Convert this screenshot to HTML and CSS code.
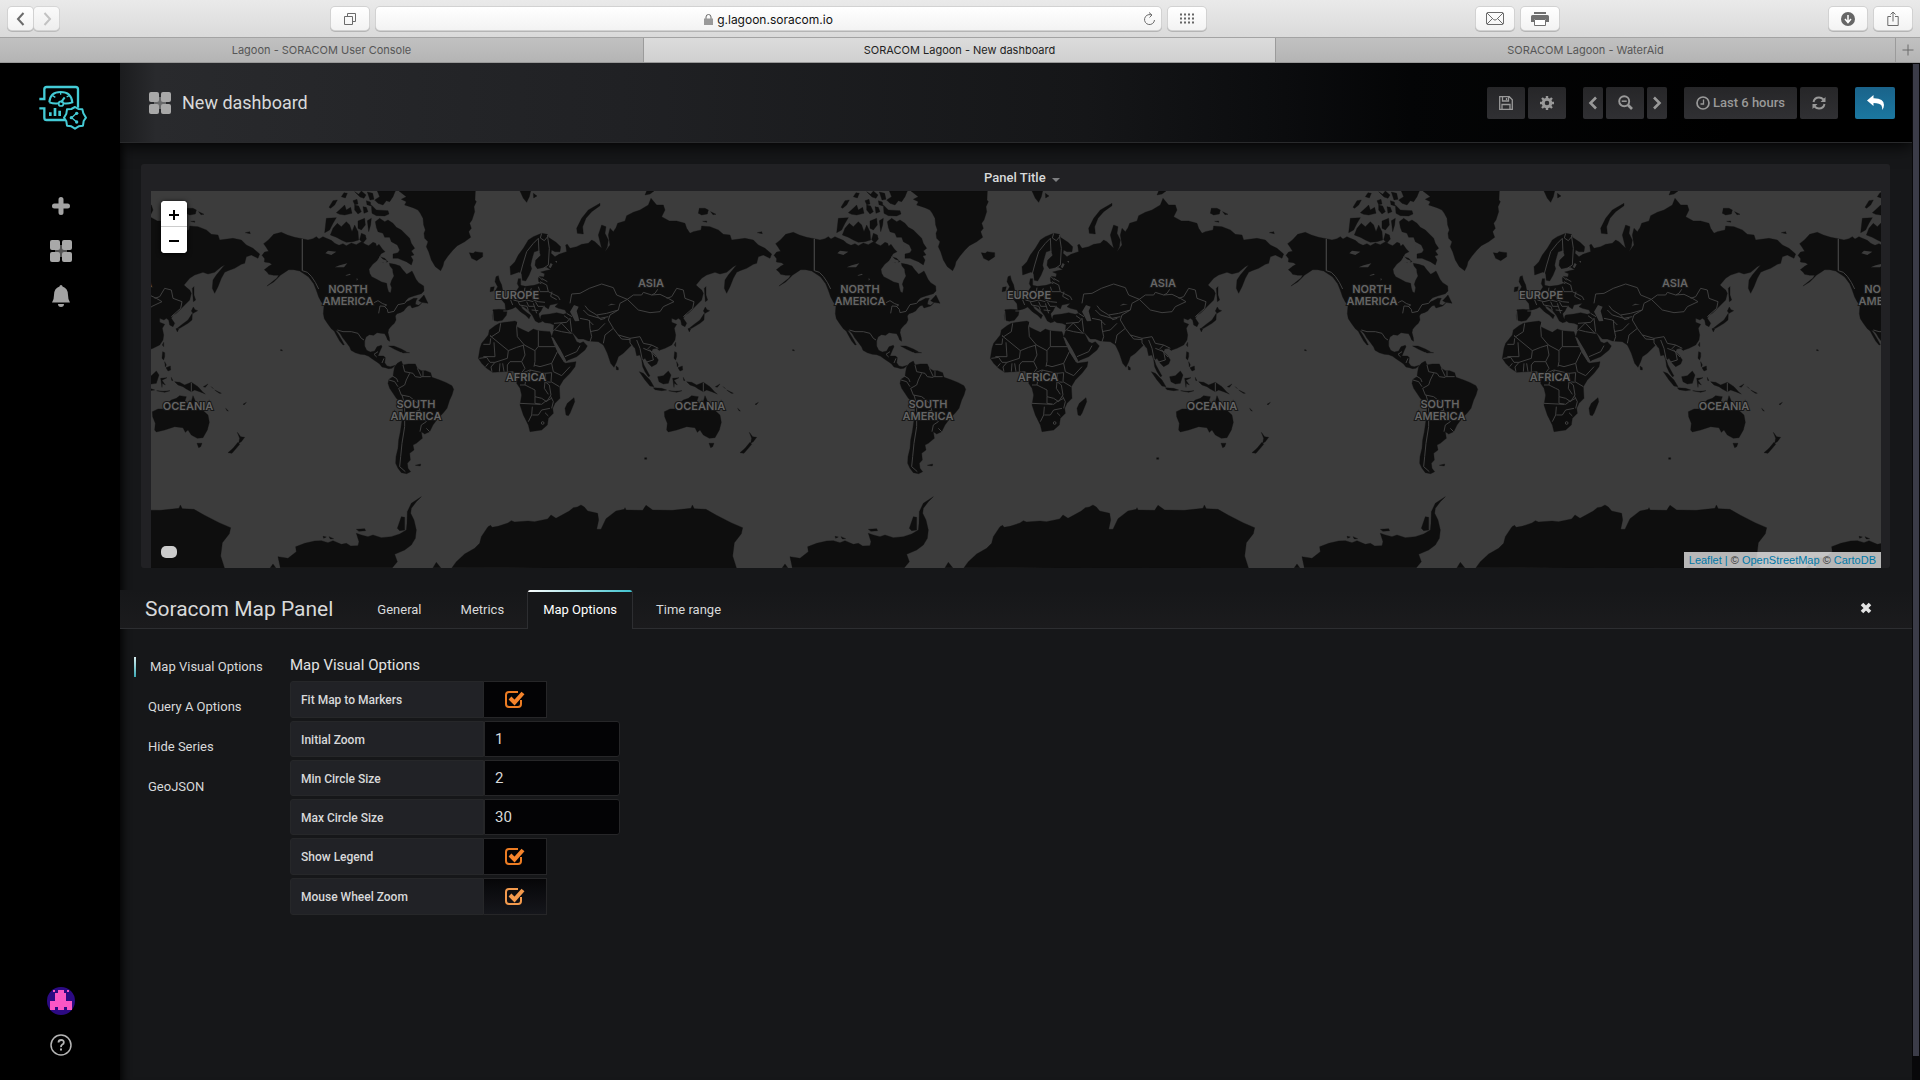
FILE: index.html
```html
<!DOCTYPE html>
<html lang="en">
<head>
<meta charset="utf-8">
<meta name="viewport" content="width=device-width, initial-scale=1">
<title>SORACOM Lagoon - New dashboard</title>
<link rel="stylesheet" href="styles.css">
</head>
<body>
<div class="browser-bar">
  <div class="bar-left">
    <div class="nav-pair">
      <button class="chrome-btn nav-btn" aria-label="Back"><svg width="10" height="14" viewBox="0 0 10 14"><path d="M7.500 1 2 7l5.500 6" class="line thick"/></svg></button>
      <button class="chrome-btn nav-btn dim" aria-label="Forward"><svg width="10" height="14" viewBox="0 0 10 14"><path d="M2.500 1 8 7l-5.500 6" class="line thick"/></svg></button>
    </div>
    <button class="chrome-btn" aria-label="Show all tabs"><svg width="14" height="14" viewBox="0 0 14 14"><path d="M1.500 4.500h8v8h-8zM4.500 4V1.500h8v8H10" class="line"/></svg></button>
  </div>
  <div class="url-bar">
    <span class="url"><svg width="9" height="11" viewBox="0 0 9 11"><path d="M2 5V3a2.500 2.500 0 0 1 5 0v2" class="line"/><path d="M0 4.500h9V11H0z" fill="#999"/></svg>g.lagoon.soracom.io</span>
    <button class="reload" aria-label="Reload"><svg width="13" height="14" viewBox="0 0 13 14"><path d="M8 2.800A5 5 0 1 0 11.500 8M6 .5l3 2.500L6.500 5.500" class="line"/></svg></button>
  </div>
  <div class="bar-right">
    <button class="chrome-btn" aria-label="Top sites"><svg width="16" height="12" viewBox="0 0 16 12"><path d="M1 1.500h15M1 5.500h15M1 9.500h15" stroke="#666" stroke-width="2" stroke-dasharray="2 2"/></svg></button>
    <div class="pair">
      <button class="chrome-btn" aria-label="Mail"><svg width="18" height="13" viewBox="0 0 18 13"><rect x=".5" y=".5" width="17" height="12" rx="1.500" class="line"/><path d="m1 1 6.500 6.500q1.500 1.200 3 0L17 1M1 12l5.500-5.500M17 12l-5.500-5.500" class="line"/></svg></button>
      <button class="chrome-btn" aria-label="Print"><svg width="18" height="14" viewBox="0 0 18 14"><path d="M3 0h12v2H3zM1.500 3h15Q18 3 18 4.500V10h-3V7H3v3H0V4.500Q0 3 1.500 3z" fill="#707070"/><path d="M3.500 7.500h11v6h-11z" fill="#fff" stroke="#707070"/></svg></button>
    </div>
    <div class="pair">
      <button class="chrome-btn" aria-label="Downloads"><svg width="14" height="14" viewBox="0 0 14 14"><circle cx="7" cy="7" r="7" fill="#666"/><path d="M7 3v7M4 7l3 3.500L10 7" fill="none" stroke="#fff" stroke-width="1.500"/></svg></button>
      <button class="chrome-btn" aria-label="Share"><svg width="12" height="16" viewBox="0 0 12 16"><path d="M4 5.500H.8v9h10.400v-9H8M6 10.500V1M3.500 3.500 6 1l2.500 2.500" class="line"/></svg></button>
    </div>
  </div>
</div>
<nav class="tab-bar" aria-label="Browser tabs">
  <a class="browser-tab" href="#console">Lagoon - SORACOM User Console</a>
  <a class="browser-tab current" href="#lagoon">SORACOM Lagoon - New dashboard</a>
  <a class="browser-tab" href="#wateraid">SORACOM Lagoon - WaterAid</a>
  <button class="new-tab" aria-label="New tab"><svg width="12" height="12" viewBox="0 0 12 12"><path d="M6 .5v11M.5 6h11" class="line"/></svg></button>
</nav>

<div class="app">
  <aside class="sidebar">
    <a class="logo" href="#home" aria-label="Lagoon home"><svg width="49" height="45" viewBox="117 75 147 135" fill="none" stroke="#44cbd6" stroke-width="7">
      <path d="M118 117h15V88q0-7 7-7h87q7 0 7 7v55M118 145h15v28q0 7 7 7h56"/>
      <path d="M148 127q2-31 34-31t35 31q-14 5-26 3M148 127q14 5 26 3M183 127l11-15" stroke-width="6"/><circle cx="183" cy="131" r="7" stroke-width="5"/><path d="M182 96v8M158 107l8 5M207 107l-7 4" stroke-width="4"/>
      <path d="M151 157v11M165 144v24M179 152v16" stroke-width="8"/>
      <path d="m225 141 10 6 12 1 3 12 8 13-7 10-2 14-13 2-11 7-11-7-13-2-2-13-7-11 7-12 2-13 13-1z" stroke-width="6" stroke-linejoin="round"/>
      <path d="m230 159-15 14 15 13" stroke-width="4"/><g fill="#44cbd6" stroke="none"><circle cx="230" cy="160" r="5"/><circle cx="214" cy="173" r="5"/><circle cx="230" cy="186" r="5"/></g></svg></a>
    <nav class="side-nav" aria-label="Main">
      <a href="#create" aria-label="Create"><svg width="22" height="22" viewBox="0 0 22 22"><path d="M11 4.500v13M4.500 11h13" stroke="#a3a3a3" stroke-width="5" stroke-linecap="round"/></svg></a>
      <a href="#dashboards" aria-label="Dashboards"><svg width="22" height="22" viewBox="0 0 22 22"><use href="#grid4"/></svg></a>
      <a href="#alerts" aria-label="Alerting"><svg width="18" height="22" viewBox="0 0 18 22" fill="#a3a3a3"><path d="M9 0q1.500 0 1.500 1.600Q16 3.500 16 10q0 5 2 7.500H0Q2 15 2 10q0-6.500 5.500-8.400Q7.500 0 9 0zM6 19h6q0 3-3 3t-3-3z"/></svg></a>
    </nav>
    <div class="side-foot">
      <a href="#profile" aria-label="Profile"><svg width="28" height="28" viewBox="0 0 28 28"><circle cx="14" cy="14" r="14" fill="#2c0a83"/><path d="M11 3h6v3h2v8h6v9h-5v-3h-3v3h-6v-3H8v3H3v-9h5V6h3zM6 3h2v2H6zM20 3h2v2h-2z" fill="#fa56c5"/></svg></a>
      <a href="#help" aria-label="Help"><svg width="22" height="22" viewBox="0 0 22 22" fill="none" stroke="#b5b5b5"><circle cx="11" cy="11" r="10" stroke-width="1.500"/><path d="M8.500 8.500q0-2.500 2.700-2.500t2.600 2.400q0 1.300-1.500 2.200T11 13.200" stroke-width="1.800"/><path d="M11 14.500v2" stroke-width="2"/></svg></a>
    </div>
  </aside>

  <main class="page">
    <header class="dash-head">
      <svg width="22" height="22" viewBox="0 0 22 22"><defs><g id="grid4" fill="#a8a8a8"><path d="M5 5h12v12H5z" opacity=".5"/><rect width="10" height="10" rx="2"/><rect x="12" width="10" height="10" rx="2"/><rect y="12" width="10" height="10" rx="2"/><rect x="12" y="12" width="10" height="10" rx="2"/></g></defs><use href="#grid4"/></svg>
      <h1>New dashboard</h1>
      <div class="tools">
        <div class="tool-group">
          <button class="tool wide" aria-label="Save"><svg width="14" height="14" viewBox="0 0 14 14"><path d="M.7.700h9.600l3 3v9.600H.7zM3.500 1v4h6V1M3 13V8.500h8V13M7.500 2v2" fill="none" stroke="#999" stroke-width="1.300"/></svg></button>
          <button class="tool wide" aria-label="Settings"><svg width="14" height="14" viewBox="0 0 14 14"><circle cx="7" cy="7" r="3.800" fill="none" stroke="#999" stroke-width="3"/><path d="M7 0v2.500M7 11.500V14M0 7h2.500M11.500 7H14M2 2l2 2M10 10l2 2M2 12l2-2M10 4l2-2" stroke="#999" stroke-width="2.400"/></svg></button>
        </div>
        <div class="tool-group">
          <button class="tool slim" aria-label="Earlier"><svg width="10" height="14" viewBox="0 0 10 14"><path d="M8 1.500 2.500 7 8 12.500" fill="none" stroke="#999" stroke-width="2.600"/></svg></button>
          <button class="tool wide" aria-label="Zoom out"><svg width="15" height="15" viewBox="0 0 15 15" fill="none" stroke="#999"><circle cx="6.200" cy="6.200" r="5" stroke-width="1.900"/><path d="M3.700 6.200h5" stroke-width="1.500"/><path d="m10 10 4 4" stroke-width="2.600"/></svg></button>
          <button class="tool slim" aria-label="Later"><svg width="10" height="14" viewBox="0 0 10 14"><path d="M2 1.500 7.500 7 2 12.500" fill="none" stroke="#999" stroke-width="2.600"/></svg></button>
        </div>
        <div class="tool-group">
          <button class="tool time"><svg width="14" height="14" viewBox="0 0 14 14" fill="none" stroke="#999"><circle cx="7" cy="7" r="6" stroke-width="1.700"/><path d="M7.500 3.500V8H4.500" stroke-width="1.300"/></svg>Last 6 hours</button>
          <button class="tool wide" aria-label="Refresh"><svg width="14" height="14" viewBox="0 0 14 14"><path d="M1.500 6Q2.500 1.500 7 1.500q2.500 0 4.500 2M12.500 8q-1 4.500-5.500 4.500-2.500 0-4.500-2" fill="none" stroke="#999" stroke-width="2"/><path d="M13.500 1v5h-5zM.5 13V8h5z" fill="#999"/></svg></button>
        </div>
        <button class="tool back" aria-label="Back to dashboard"><svg width="17" height="15" viewBox="0 0 17 15"><path d="M6.500 0v3.200Q17 3 17 10q0 3-2 5 .5-2.500-.5-4.500Q13 8 6.500 8v3L0 5.500z" fill="#fff"/></svg></button>
      </div>
    </header>

    <section class="panel">
      <h2 class="panel-title">Panel Title <span class="caret"></span></h2>
      <div class="map">
        <svg class="map-canvas" role="img" aria-label="World map">
          <defs>
            <g id="world">
              <g transform="scale(.33333)">
                <g transform="translate(-357 -123)" class="land">
                  <path d="M460 247l18 8 22 7 23 4 17 4 15-4 10-6 8 7 12-7 10 5 8 3 9 4 8 8 13 6 12-5 10 6 15-8 15 5 15-9 12 8 10 4 13-10 8 3 3 9 7-6 10 14 8 8-12 6-6 12-7 10-12 10-11 15 2 12 6 10 15 8 15 8 15 4 2 13 4 13 6 2 3-15-4-10 4-12 7-13-3-10-1-10-8-10-2-8 17 3 15 5 7 10 13 15 8-5 8-5 5 10 7 15 8 10 15 10 1 15-8 8-23 7-15 5-12 13 12-3 15-8 11 0-4 8-2 10 10 3 10-8-10 10-20 6-5-8-7 2-8 8-5 7-10 5-10 3-5 7 2 12-5 10-9 8-8 10-2 10 4 15 1 11-6-4-4-10-5-9-11-1-12-2-10 8-13-2-10 7-4 12v15l6 13 11 5 13-3 7-13 13-4 2 4-5 11-5 12-2 5h17l5 5-2 15 7 10 10 2 15-4-10 9-10 1-10-3-10-2-8-10-12-8-10-7-10-7-12-5-13-1-15-5-13-7-4-10-11-15-10-13-7-12-8-8-7-2 8 10 10 17 9 16-4 1-10-12-8-14-8-15-9-8-11-15-10-15-3-15 2-25-8-10-8-15-7-20-8-20-15-20-12-8-15-10-18-4h-15l-10 7-15 10-10 10-10 10-20 12 15-12 15-12 5-8-15 0-15-3-5-7-8-7 13-10 10-6-8-5-15-2 1-10-8-10 8-10 12-2-8-13-7-10 15-12 15-16z"/>
                  <path d="M813 123h229l-1 27 4 5-7 15 2 15-8 25-7 10 5 15-8 10 6 17-18 13-22 12-13 13-15 18-12 17-3 13-7 14-16-12-12-20-8-25-7-15 5-15-10-10-2-15 4-10-5-15-2-20-8-15-7-10-15-7-25-8 5-10-15-7 15-8z"/>
                  <path d="M748 123h54l-7 17-10 15-10-3-10 13-15-5-10-10 15-10zM595 205l30-2-10 17-10 20-15 8zM607 255l8-20 13-15 12 10 15-15 10 10 7 20 8-20 10 20 2 25-17 5-20 2-15-7-15-8zM603 172l12-20 13-2-8 15-12 10zM625 188l15-13 10-10 5 15 13-8 4 18-22 5-15-2zM680 165l12 3 8 17-10 7-10-12zM705 170l10 2 5 13-12 5zM730 165l15 15 35 2 3 10-13 6-25-1-13-7zM690 213l20-8 2 20-12 15-10-5zM718 212l12-7-2 20-6 20zM700 250l12 5 3 12-10 12-10-10zM742 215l13-10 15 10 10-5 15 10 10 12 15 8 15 15 10 10 5 15 10 15-10 8 8 12-10 3 7 12-5 15-15-10-13-5-12-5-15 0v-13l15-4 5-8-7-15-18-10-5-13h-15l-5-12-15-5-5-13zM755 320l15 5 10 10-15 3zM675 152l12-4 3 14-10 2zM640 140l8-12 10 2-6 14zM680 125l12 8 8-10 14 12-6 10-12-4zM718 126l16 4 4 18-12 2zM715 152l12 4 2 12-12-4zM872 452l16-17 12 25-20-3zM782 588l16 0 22 9 15 8-17 1-18-8zM820 605l25 3-20 1zM862 946l16-4-1 6zM456 600l6-1 1 4z"/>
                  <path d="M800 650l8-10 12-7 5 12 15-3h22l6 13 12 7h13l15 6 4 14 23 8 20 8 17 9 5 11-5 17-7 15-8 25-12 15-15 15-15 20-10 20-15 7-10-7 3 20-18 15-10 5 3 15-13 10 2 20-9 10 2 15 8 10-12 6-16-3-10-13-7-15 1-20 6-25 2-25 5-25 5-35 3-30-3-20-17-15-10-15-10-15-5-15 3-12 12-8 2-15z"/>
                  <path d="M457 1253l-7-33 30 5 25-20-2-15 27-10 30-7 20-1 20 6 15-6 25 11 15-3 13 8 22-1 3-12-8-25 15 5 20 5 15-5 25 8 30-3 25-8 20-12 2-20 1-35 12-25 30-20-15 15-15 20-2 15 10 20 7 30-3 25-12 20-20 15-30 13 8 22-15 18zM808 1135l12-35 10 2v38l-15 2zM685 1138l25-2 3 6-20 2zM585 1159l10 2-8 4zM603 1160l14 6-10 1zM427 1253l8-11 8 11zM915 1253l10-16 13 16z"/>
                  <path d="M972 1253l13-18 25-23 30-17 15-15 5-20 20-30 8-4 4 6 18-3 30-10 10-7 10 4 40-3 19 2 40-8 10-12 15 10 40-22 12-10 12-2 11-6 10 6 10 12 30 7 3 20-6 28h13l15-32 30-23 25-5 2-5 3 7 50 1 10-15 20 14 60 1 55-6 4-10 6 11 35 2 30 17 45 23 35 15-4 18-21 27-5 40 12 38z"/>
                  <g class="sea">
                    <path d="M592 310l8-8 25 3-15 10zM620 352l15-6 23-6-10 12zM652 376l14-5 2 3-12 3zM755 318l10 10 12 4-4 8-14-3-8-8zM790 285l12 5-2 12-10-4zM686 384l4 4-4 4z"/>
                  </g>
                  <g class="border">
                    <path d="M523 266v96" stroke-width="4"/>
                    <path d="M523 362l15 5 12 12 12 18 10 20M628 540l17 5h25l20 5 10 15 8 5M738 458l12-6 14 9 12 4-6 4-14-1-4 22M768 468l10 10 2 10 18-4 12-20 20-4 10-12M825 645l5 20 25 5 7 10M845 670l-10 20-5 15M783 690l17 5 10 15M830 705l-18 10 8 20 25 5M845 740l25 20 5 20-25 10h-20M875 780l5 20 15 15-15 10M830 790v40l-8 50-4 40-3 30 17 15M880 825l-4 20M895 835l10 10M868 655l12 25 28 0M885 662v18M822 735l8 28 0 27M750 605l-12 8 8 8M768 625l-6 14M862 680l14 2 4 0M790 676l16 10 4 10"/>
                  </g>
                </g>
                <g transform="translate(669 -18)" class="land">
                  <path d="M122 270l-2-25 15-15 10-20 15-20 15-25 15-10 25-10 17 3 3 9 23 15 14 13-2 15-15 0-10-5-2 10 12 10 12-7 13-5 10-3-3-20 5-2 8 12 20-5 15-7 20-3 10-10 10 5 10 10 10 10-5-20-5-20 10-30 13 5-3 20 10 20-3 20-7 15 15-20-5-30 5-20 10 10 8-12 5-13 22-7 5-16 20-10 20-7 25-15 8-20 17 20h20l5 15-10 20 23 13h22l25 7 5 15 10 15 10-5 23-5 2-12 25 2 25 10 15 13 20 2 5 15 40-5 25 5 15 15 20 10 20 17-5 13-20-10-15 5-5 20-10 3-20 12-20 7-10 5-10 18-10 25-10 20-7-15 2-25 10-15 25-30-10 5-20 17-20 5-15-5-25 8-15 10-17 20 7 7 10 8 5 10-5 20-15 15-15 15-10 10-10 5-5 10 10 15-5 10-10-5-3-15-7-5-7 5-13-5v12l15 6-7 12 4 20-2 15-10 15-20 10-15 5-10-5-12 2-3 8 10 10 10 15-5 12-15 8-10-10-10-15-8 5 5 15 8 15 10 18-5 2-10-15-7-15-3-20-5-15-10 2-5-22-10-10-10 10-15 15-15 10-5 15-8 17-10-12-10-30-7-15-5-10-15-10-30-2-15-6h-15l-20-22-5-5 10 15 10 20 10 5 10-5 12 13-7 12-25 20-25 10-8 5-12-20-13-20-12-22-5-13 5-15 2-20-12-5-15-2-13-8v-10l3-5 25-3 20-4 20 5 10-3-5-10-20-5-10-5 10-10-25 5-5 12-10-7-3-5-9 18-7 8 2 10 8 14-10 3-10-5-9-17-12-15-13-10-10-5 5 10 15 13 10 7-5 10-10-10-15-10-15-15-10 5-15 5-3 15-12 15-15 3-13-3-2-15 2-17 18-1 20 1-2-18-10-12 17-8 15-5 10-10 10-15-5-10 3-15h7v20l15 3 25-3 15-5-2-15 2-7 15 2 2-10-12-5 20-5 10-2-13-8-27 5-7-10 2-15 15-15-5-15-15 5-7 25-3 15 3 10-8 20-10 17-10-2-2-20-8-5z"/>
                  <path d="M88 415l17-3 30-4 7 4-2 13 20 10 15 7 15-10 15 5 35 3 5 15 5 20 12 25 13 20 10 15 33-5-3 15-15 20-20 20-12 20 2 35-15 15-7 15 2 15-15 15-3 20-17 15-35 5-5-20-15-30-10-30 5-30-5-20-10-15 5-25-17-12-28 2-32 2-18-12-15-15-10-15 5-30 5-15 20-25 3-15 17-13z"/>
                  <path d="M288 690l-3-20 7-15 20-17 2 12-14 35-5 7zM75 290l3-15 7-3 3 13 7 15 3 15-8 5-15 0 8-15zM60 320l2-13 11-2-3 13zM-2 203l12 2 5-5 23 3v12l-18 12-15-7zM322 145l-2-15 15-30 20-25 35-20v7l-25 18-17 20-10 25 2 22zM150 18h32l-4 17-8 17-10-12zM190 25l11 8-10 6zM525 30l5-12h22l-12 9zM685 85l3-15 17 0 10 5-3 12-17 3zM722 80l16 8-9 1zM698 109l12-1v4zM862 143l13-3 2 6z"/>
                  <path d="M703 310l5-5v25l5 15-7 5zM700 378l6-12 5 8 8 3-14 8zM703 385l-1 20-12 10-25 15-10 2 15-12 20-15zM654 431l8 1-4 9zM613 480l4-8v13zM563 492l8-2-3 7zM614 500l6 3v12l-3 10-5-5zM620 530l5 10-3 6zM624 548l13-5 1 12-8 3zM508 560l12 5 20 20 12 20-12-2-15-18zM550 608l25 2 15 5-15 2-20-3zM596 617l20 2 20-2-16 5zM563 575l17-3 15-14 8 12-8 25-15 2-13-7zM608 580l19-2-15 8 10 14-9-5-1 12zM650 590l15 2 15 8 20-8 20 13 15 17 7 5-17-7-15-5-10 5-15-8-10-7-15-5zM640 577l5 10-4-1zM736 605l14-8-8 10zM760 605l6 6zM770 615l20 10-6 0zM803 670l8 8-4-1zM855 658l10-6-6 7zM438 543l7 5v7l-6-1z"/>
                  <path d="M583 680l17-8h15l10-14 15-13 15-5 10-8 20 3-5 15 17 10 8-28 10 23 15 17 20 18 4 22-6 23-13 23-17 2-18-10-10-15-8 7-7-14-25-3-30 10-25 6-5-6 2-20-8-20zM717 775l15 0-4 10-6 3zM838 742l10 13 12 2-10 13-8 5 3-15zM840 772l5 6-23 27-12-2 15-13zM524 818h6v5h-6z"/>
                  <g class="sea">
                    <path d="M312 360l14 5-6 13 5 17 3 13-13 1-7-14-8-15zM243 455l7 3 22 37 13 25 5 10-8 2-17-27zM438 358l-25 4 10-6zM236 246l6-12 6 4-6 12zM255 228l6 0 0 6z"/>
                  </g>
                  <g class="border">
                    <path d="M92 415l-4 25-23 15-5-3 55 45 25-10 23-7-21-25-2-30 4-14M40 478h20l2-18M72 472l3 43H40M163 480l32 17 9-12M205 437v48h50M195 497v33l-3 15M160 482l5 28-10 20h-35l-8 10v20M115 497l-3 23-37 12M192 540l18 5 35-10 17-35M245 535l5 25 25 12 25-27M245 563l-2 27 25 15M155 565l25-10 45 10 20-2M150 600h15l20 10 10 5v20l20 5 15 10 13-20-5-30-13-10M150 655l60 3M187 665l-2 25-10 20M187 690h18l10-15 25-5M195 635v20l20 3 10-8 20-10M28 520l22-3 10 15 15 0M75 532l-12 14 3 14M90 535l-2 25M98 535l4 25M55 535l-8 10M155 530l10 20-15 20M165 600l3-20 14-25M225 565l3 25 14 2M225 683l10 10M242 634l8 16-5 20M225 590l-2 20 12 18"/><circle cx="218" cy="714" r="4"/>
                    <path d="M300 355l5-28 25-2 28-15 37-13 35 11 10 22 32 13-22 12-5 20-35 10-30 5-25-15-10-13M472 343l18-13h25l5-8 25 8 25-2 25 12 17 10-32 15-10 15-30 3-35-8zM545 330l10-5 8-12M590 340l15-5 15-25 20 5 5 25 27 10-4 20-28 25M445 375l-25 15-5 15 15 25 15 20 35 10 30-5 10 20 25 5 20 10M430 430l-25 20-5 25M358 405l2 25 5 25-5 15M360 440l25-5 20-20M330 400l25 5 15 15M340 375l15 15 35 10 25-5M380 390l12 14 14-4M300 400l5 40M255 435l20 5 30 5M250 438l24-24 28 30M252 415l38-3 10-12M285 515l35-15 10-18M500 465l10 25 7 35M520 490l25 10 5 25-20 6M545 480l-12 12M538 494l20 22M445 450l10 12 25 2M480 460l0 14 8 10M290 385l16 10M282 392l14 10"/>
                    <path d="M130 345l20 5 20-5 20 5M160 325l25 5 5 15 15 5 20 2M165 308l-3 17M205 305l5 15h25l30 15 5 10M210 290l20 10 5 20M215 280l17 10M190 355l5 15 5 15M232 150l6 40-3 50-15 10M205 160l-15 15-20 25-12 40-8 30M205 160l2 42M68 378l2 32M105 340l15 0 8 20M100 378l22 0M145 350l4 10 22 4 4 12M170 350l6 14 16 0M185 375l20 2M196 350l8 14 16 0M215 145l-4 14 12 8 10-12M150 330l-10 14M184 310l-6 16 12 6M246 320l-4 14 18 10M700 593v27M204 272l14 14M200 290l14 6"/>
                  </g>
                </g>
              </g>
              <g class="places">
                <text x="101" y="102">NORTH</text><text x="101" y="114">AMERICA</text>
                <text x="169" y="217">SOUTH</text><text x="169" y="229">AMERICA</text>
                <text x="270" y="108">EUROPE</text><text x="404" y="96">ASIA</text>
                <text x="279" y="190">AFRICA</text><text x="453" y="219">OCEANIA</text>
              </g>
            </g>
          </defs>
          <use href="#world" x="-416"/><use href="#world" x="96"/><use href="#world" x="608"/><use href="#world" x="1120"/><use href="#world" x="1632"/>
        </svg>
        <div class="zoom-ctl"><button aria-label="Zoom in"><svg width="10" height="10" viewBox="0 0 10 10"><path d="M5 0v10M0 5h10" stroke="#000" stroke-width="2"/></svg></button><button aria-label="Zoom out map"><svg width="10" height="10" viewBox="0 0 10 10"><path d="M0 5h10" stroke="#000" stroke-width="2"/></svg></button></div>
        <div class="legend"></div>
        <div class="credit"><a href="#leaflet">Leaflet |</a> © <a href="#osm">OpenStreetMap</a> © <a href="#carto">CartoDB</a></div>
      </div>
    </section>

    <section class="editor">
      <header class="editor-head">
        <h2>Soracom Map Panel</h2>
        <nav class="tabs" aria-label="Panel editor">
          <a href="#general">General</a><a href="#metrics">Metrics</a><a class="active" href="#options">Map Options</a><a href="#range">Time range</a>
        </nav>
        <button class="close" aria-label="Close"><svg width="12" height="12" viewBox="0 0 12 12"><path d="m2 2 8 8M10 2l-8 8" stroke="#e3e3e3" stroke-width="3.600"/></svg></button>
      </header>
      <div class="editor-body">
        <nav class="sections" aria-label="Option groups">
          <a class="active" href="#visual">Map Visual Options</a><a href="#query-a">Query A Options</a><a href="#hide">Hide Series</a><a href="#geojson">GeoJSON</a>
        </nav>
        <form class="options">
          <h3>Map Visual Options</h3>
          <div class="row tick"><label for="fit">Fit Map to Markers</label><span class="tick-cell"><input id="fit" type="checkbox" checked><svg width="20" height="18" viewBox="0 0 20 18"><path d="M16 10v4q0 3-3 3H4q-3 0-3-3V5q0-3 3-3h9" class="box"/><path d="m5 8 4.500 4.500L18 3" class="mark"/></svg></span></div>
          <div class="row"><label for="zoom">Initial Zoom</label><input id="zoom" class="num" type="number" value="1"></div>
          <div class="row"><label for="min">Min Circle Size</label><input id="min" class="num" type="number" value="2"></div>
          <div class="row"><label for="max">Max Circle Size</label><input id="max" class="num" type="number" value="30"></div>
          <div class="row tick"><label for="show">Show Legend</label><span class="tick-cell"><input id="show" type="checkbox" checked><svg width="20" height="18" viewBox="0 0 20 18"><path d="M16 10v4q0 3-3 3H4q-3 0-3-3V5q0-3 3-3h9" class="box"/><path d="m5 8 4.500 4.500L18 3" class="mark"/></svg></span></div>
          <div class="row tick"><label for="wheel">Mouse Wheel Zoom</label><span class="tick-cell hot"><input id="wheel" type="checkbox" checked><svg width="20" height="18" viewBox="0 0 20 18"><path d="M16 10v4q0 3-3 3H4q-3 0-3-3V5q0-3 3-3h9" class="box"/><path d="m5 8 4.500 4.500L18 3" class="mark"/></svg></span></div>
        </form>
      </div>
    </section>
  </main>
  <div class="scroll-track"><div class="scroll-thumb"></div></div>
</div>
</body>
</html>
```
FILE: styles.css
```css
* { box-sizing: border-box; }
body {
  margin: 0;
  min-height: 100vh;
  display: flex;
  flex-direction: column;
  background: #161719;
  color: #d8d9da;
  font: 13px/20px Roboto, sans-serif;
}
a { color: inherit; text-decoration: none; }
button { border: 0; padding: 0; font: inherit; color: inherit; }
h1, h2, h3 { margin: 0; font-weight: 400; }
svg { display: block; flex: none; }

/* browser chrome */
.browser-bar {
  height: 38px;
  padding: 0 8px;
  display: grid;
  grid-template-columns: 361fr 785fr 744fr;
  gap: 7px;
  align-items: center;
  background: linear-gradient(#eaeaea, #dadada);
  border-bottom: 1px solid #a3a3a3;
}
.bar-left, .bar-right { display: flex; justify-content: space-between; }
.nav-pair { display: flex; gap: 1px; }
.pair { display: flex; gap: 7px; }
.line { fill: none; stroke: #6b6b6b; stroke-width: 1; }
.thick { stroke-width: 2; }
.dim { opacity: .8; }
.dim .line { stroke: #bbb; }
.chrome-btn, .url-bar {
  height: 23px;
  border-radius: 4px;
  background: linear-gradient(#fff, #f3f3f3);
  box-shadow: 0 0 0 1px #d2d2d2, 0 1px 0 1px #b5b5b5;
}
.chrome-btn { width: 38px; display: grid; place-items: center; }
.nav-btn { width: 25px; }
.url-bar { display: flex; align-items: center; justify-content: center; position: relative; color: #111; font: 12px/20px Inter, sans-serif; }
.url { display: flex; gap: 4px; align-items: center; padding-top: 2px; }
.reload { position: absolute; right: 5px; background: none; }
.tab-bar {
  height: 25px;
  display: grid;
  grid-template-columns: 644fr 632fr 620fr 24px;
  background: linear-gradient(#c1c1c1, #b4b4b4);
  border-bottom: 1px solid #999;
  color: #565656;
  font: 11px/24px Inter, sans-serif;
  text-align: center;
}
.browser-tab { border-right: 1px solid #9b9b9b; }
.current { background: linear-gradient(#dcdcdc, #d0d0d0); color: #222; }
.new-tab { background: none; display: grid; place-items: center; }

/* shell */
.app { flex: 1; display: flex; overflow: hidden; }
.sidebar { width: 120px; background: #000; display: flex; flex-direction: column; align-items: center; padding: 22px 0 24px 2px; }
.logo { margin-left: 4px; }
.side-nav { display: flex; flex-direction: column; align-items: center; gap: 23px; margin-top: 65px; }
.side-foot { display: flex; flex-direction: column; align-items: center; gap: 19px; margin-top: auto; }
.page { flex: 1; min-width: 0; display: flex; flex-direction: column; box-shadow: inset 10px 0 10px -8px #000; }
.scroll-track { width: 8px; background: #08080a; padding: 1px 1px 24px; display: flex; }
.scroll-thumb { flex: 1; background: #3b3c48; }

.dash-head {
  height: 80px;
  display: flex;
  align-items: center;
  padding: 0 17px 0 29px;
  background: linear-gradient(90deg, #1b1c1e, #292a2d 2%, #202124 28%, #151618 54%, #0b0c0e 65%, #040506 72%, #000 90%);
  border-bottom: 1px solid #292a2c;
  box-shadow: 0 2px 16px #000;
}
.dash-head h1 { font-size: 18px; margin-left: 11px; }
.tools { margin-left: auto; display: flex; gap: 17px; }
.tool-group { display: flex; gap: 3px; }
.tool {
  height: 32px;
  display: flex;
  align-items: center;
  justify-content: center;
  gap: 3px;
  background: linear-gradient(#262628, #303033);
  border-radius: 2px;
  color: #999;
  font-weight: 500;
}
.wide { width: 38px; }
.slim { width: 20px; }
.time { width: 113px; }
.back { width: 40px; background: linear-gradient(#1a638a, #1b77a0); }

/* map panel */
.panel { margin: 21px 22px 0 21px; background: #212124; border-radius: 3px; padding: 0 9px 0 10px; }
.panel-title { height: 27px; padding-left: 12px; font-size: 13px; line-height: 27px; font-weight: 500; text-align: center; }
.caret { display: inline-block; margin-left: 3px; border: 4px solid transparent; border-top-color: #7d7e80; border-bottom: 0; }
.map { position: relative; height: 377px; background: #3c3c3c; overflow: hidden; }
.map-canvas { width: 100%; height: 100%; }
.land { fill: #0e0e0e; stroke: #0e0e0e; stroke-linejoin: round; }
.sea { fill: #3c3c3c; stroke: none; }
.border { fill: none; stroke: #404040; stroke-width: 3; }
.places { font: 600 11px Inter, sans-serif; fill: #656565; stroke: #171717; stroke-width: 2; paint-order: stroke; text-anchor: middle; }
.zoom-ctl { position: absolute; left: 10px; top: 10px; width: 26px; border-radius: 4px; overflow: hidden; box-shadow: 0 1px 5px #000; background: #fff; }
.zoom-ctl button { width: 26px; height: 26px; display: grid; place-items: center; background: #fff; padding-top: 2px; }
.zoom-ctl button:first-child { border-bottom: 1px solid #ccc; }
.legend { position: absolute; left: 10px; bottom: 10px; width: 16px; height: 12px; border-radius: 5px; background: #ccc; }
.credit { position: absolute; right: 0; bottom: 0; padding: 0 5px; background: rgba(255, 255, 255, .7); color: #333; font: 11px/16px "Liberation Sans", sans-serif; }
.credit a { color: #0078a8; }

/* panel editor */
.editor { margin-top: 22px; }
.editor-head { height: 39px; display: flex; padding: 0 40px 0 25px; border-bottom: 1px solid #2d2e31; background: linear-gradient(#161719, #1b1b1d); }
.editor-head h2 { font-size: 21px; line-height: 38px; }
.tabs { display: flex; margin-left: 28px; height: 39px; }
.tabs a { padding: 2px 15px 0; line-height: 36px; border: solid transparent; border-width: 0 1px; margin-right: 7px; }
.tabs .active {
  border-color: #2d2e31;
  background: linear-gradient(90deg, #fff, #3fc3cf) top / 100% 2px no-repeat, #161719;
  border-radius: 3px 3px 0 0;
  color: #fff;
}
.close { margin: 0 0 2px auto; background: none; display: grid; place-items: center; }
.editor-body { display: flex; padding: 24px 0 0 14px; }
.sections { width: 156px; display: flex; flex-direction: column; gap: 20px; padding-top: 4px; }
.sections a { padding-left: 14px; }
.sections .active { background: linear-gradient(#d8eef0, #3aa9b5) left / 2px 100% no-repeat; padding-left: 16px; }
.options h3 { font-size: 15px; line-height: 24px; margin-bottom: 4px; color: #e3e3e3; }
.row { display: flex; height: 36px; margin-bottom: 3px; }
.row label { width: 194px; padding-left: 10px; font-size: 12px; line-height: 36px; font-weight: 500; background: #212226; border: 1px solid #262729; border-radius: 3px 0 0 3px; }
.num {
  width: 136px;
  border: 1px solid #262628;
  border-radius: 0 3px 3px 0;
  background: #030305;
  color: #d8d9da;
  font: 15px/20px Roboto, sans-serif;
  padding: 0 10px;
  appearance: textfield;
}
.num::-webkit-inner-spin-button { display: none; }
.tick { height: 37px; }
.tick-cell { width: 63px; display: grid; place-items: center; background: #030305; border: 1px solid #262628; border-left: 0; }
.tick-cell > * { grid-area: 1 / 1; }
.tick-cell input { appearance: none; margin: 0; width: 100%; height: 100%; }
.tick-cell svg { pointer-events: none; margin-bottom: 2px; }
.hot { background: linear-gradient(#060608, #15161b); }
.box { fill: none; stroke: #ec7c23; stroke-width: 2; }
.mark { fill: none; stroke: #f5842c; stroke-width: 4; }
.hot .box, .hot .mark { stroke: #f39a4d; }
```
